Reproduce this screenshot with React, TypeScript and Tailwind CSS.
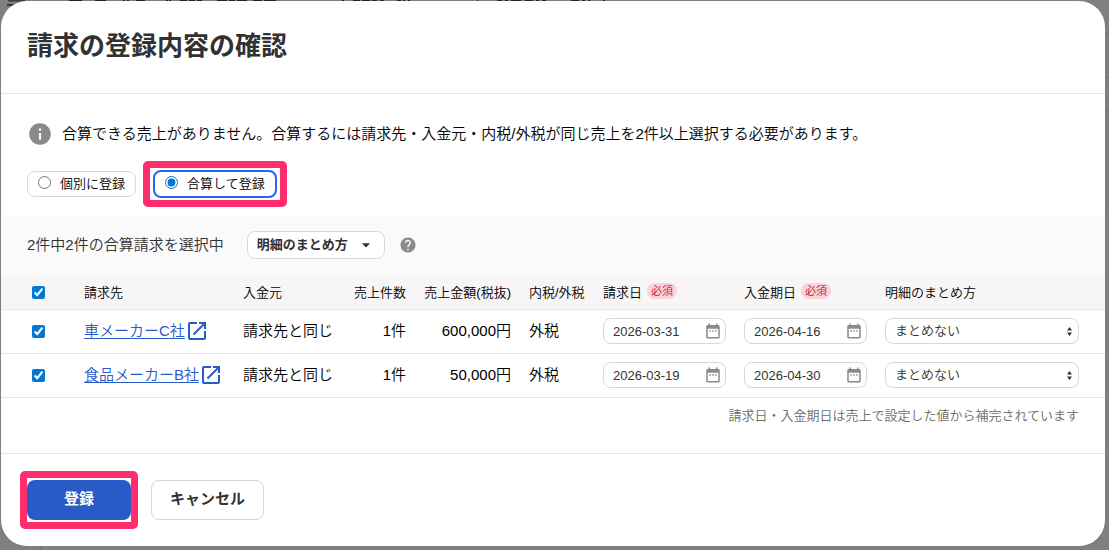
import { useState } from 'react'
import type { ReactNode } from 'react'
import { MdArrowDropDown, MdDateRange, MdHelp, MdInfo, MdOpenInNew } from 'react-icons/md'

type Invoice = {
  id: string
  name: string
  amount: string
  billingDate: string
  paymentDate: string
}

const invoices: Invoice[] = [
  { id: 'c', name: '車メーカーC社', amount: '600,000円', billingDate: '2026-03-31', paymentDate: '2026-04-16' },
  { id: 'b', name: '食品メーカーB社', amount: '50,000円', billingDate: '2026-03-19', paymentDate: '2026-04-30' },
]

const checkboxClass = 'block size-[13px] accent-[#0078d7]'

// Dimmed page edges that peek out around the dialog
const Backdrop = () => (
  <svg aria-hidden="true" className="pointer-events-none absolute inset-0 h-full w-full" fill="none">
    <path d="M40.5 0v550M155.5 0v1M325.5 0v1M448.5 0v1M1105 32.5h4M1105 77.5h4M1105 110.5h4" stroke="#737373" />
    <path d="M8 .5h17M7 5h8" stroke="#3c3c3c" strokeWidth="2" />
    <path
      d="M69 .5h13M95 .5h11M123 .5h2M127 .5h2M136 .5h9M166 .5h2M169 .5h2M180 .5h7M189 .5h6M197 .5h5M217 .5h10M229 .5h6M237 .5h10M253 .5h9M264 .5h12M342 .5h2M353 .5h7M362 .5h8M372 .5h5M380 .5h4M397 .5h4M403 .5h2M408 .5h2M477 .5h1M497 .5h5M505 .5h3M511 .5h10M525 .5h8M536 .5h3M542 .5h4M571 .5h8M582 .5h3M588 .5h2M603 .5h2"
      stroke="#26222a"
    />
  </svg>
)

const Highlight = ({ tight, children }: { tight?: boolean; children: ReactNode }) => (
  <div className="relative">
    {children}
    <span
      className={`pointer-events-none absolute -inset-y-[9px] rounded-[5px] border-[7px] border-[#ff2d6b] ${
        tight ? '-inset-x-[7px]' : '-inset-x-[10px]'
      }`}
    />
  </div>
)

const Required = () => (
  <span className="ml-[5px] inline-block rounded-full bg-[#fad2d7] px-1 align-[2px] text-[11px] leading-4 text-[#b4143c]">
    必須
  </span>
)

const DateField = ({ label, value }: { label: string; value: string }) => (
  <div className="relative">
    <input
      type="text"
      aria-label={label}
      defaultValue={value}
      className="block h-[26px] w-full rounded-lg border border-[#d7d7d7] bg-white pr-8 pl-[9px] text-[13px] text-[#323232]"
    />
    <MdDateRange className="pointer-events-none absolute top-1 right-1 size-[18px] text-[#8c8989]" />
  </div>
)

const GroupingSelect = ({ label }: { label: string }) => (
  <div className="relative">
    <select
      aria-label={label}
      className="block h-[26px] w-full appearance-none rounded-lg border border-[#d7d7d7] bg-white pr-6 pl-[9px] text-[13px] text-[#323232]"
    >
      <option>まとめない</option>
      <option>まとめる</option>
    </select>
    <svg viewBox="0 0 5 9" className="pointer-events-none absolute top-[9px] right-[7px] h-[9px] w-[5px] fill-[#323232]">
      <path d="M2.5 0 5 3.6H0zM0 5.4h5L2.5 9z" />
    </svg>
  </div>
)

export default function App() {
  const [mode, setMode] = useState('combined')

  return (
    <div className="relative min-h-screen bg-[#808080] pt-px pr-1 pb-1 pl-px font-['Liberation_Sans','Noto_Sans_CJK_JP',sans-serif] text-[15px] font-[350] text-black">
      <Backdrop />
      <div role="dialog" aria-labelledby="dialog-title" className="relative overflow-hidden rounded-[26px] bg-white">
        <header className="border-b border-[#e6e6e6] px-[26px] pt-[25px] pb-[27px]">
          <h1 id="dialog-title" className="text-[26px] leading-10 font-bold text-[#323232]">
            請求の登録内容の確認
          </h1>
        </header>

        <div className="px-[26px] pt-[29px] pb-[17px]">
          <p className="flex items-center gap-[9px] leading-[22px]">
            <MdInfo className="-my-1 size-[26px] shrink-0 text-[#8c8989]" />
            合算できる売上がありません。合算するには請求先・入金元・内税/外税が同じ売上を2件以上選択する必要があります。
          </p>

          <div className="mt-[25px] flex items-center gap-[17px] text-[13px]">
            <label className="flex h-[26px] items-center gap-[9px] rounded-lg border border-[#d7d7d7] px-[10px]">
              <input
                type="radio"
                name="mode"
                checked={mode === 'single'}
                onChange={() => setMode('single')}
                className="mb-1 size-[13px] accent-[#0078d7]"
              />
              個別に登録
            </label>
            <Highlight>
              <label className="flex h-7 items-center gap-[9px] rounded-lg border-2 border-[#2864f0] px-[10px]">
                <input
                  type="radio"
                  name="mode"
                  checked={mode === 'combined'}
                  onChange={() => setMode('combined')}
                  className="mb-1 size-[13px] accent-[#0078d7]"
                />
                合算して登録
              </label>
            </Highlight>
          </div>
        </div>

        <div className="flex items-center bg-[#fafafa] px-[26px] pt-4 pb-[17px] text-[#323232]">
          <span>2件中2件の合算請求を選択中</span>
          <button
            type="button"
            className="ml-[23px] flex h-7 items-center gap-2 rounded-lg border border-[#d7d7d7] bg-white pr-2 pl-[9px] text-[13px] font-bold"
          >
            明細のまとめ方
            <MdArrowDropDown className="size-5" />
          </button>
          <button type="button" aria-label="ヘルプ" className="ml-[14px]">
            <MdHelp className="size-[18px] text-[#8c8989]" />
          </button>
        </div>

        <table className="w-full table-fixed text-left">
          <colgroup>
            <col className="w-[74px]" />
            <col className="w-[159px]" />
            <col className="w-[90px]" />
            <col className="w-[91px]" />
            <col className="w-[105px]" />
            <col className="w-[74px]" />
            <col className="w-[141px]" />
            <col className="w-[141px]" />
            <col />
          </colgroup>
          <thead className="bg-[#f7f5f6] text-[13px]">
            <tr className="h-[33px] border-b border-[#e6e6e6] *:px-[9px] *:font-[350] *:whitespace-nowrap">
              <td>
                <input type="checkbox" aria-label="すべて選択" defaultChecked className={`${checkboxClass} ml-[22px]`} />
              </td>
              <th>請求先</th>
              <th>入金元</th>
              <th className="text-right">売上件数</th>
              <th className="text-right">売上金額(税抜)</th>
              <th>内税/外税</th>
              <th>請求日<Required /></th>
              <th>入金期日<Required /></th>
              <th>明細のまとめ方</th>
            </tr>
          </thead>
          <tbody>
            {invoices.map((invoice) => (
              <tr key={invoice.id} className="h-11 border-b border-[#e6e6e6] *:px-[9px] *:whitespace-nowrap">
                <td>
                  <input type="checkbox" aria-label={invoice.name} defaultChecked className={`${checkboxClass} ml-[22px]`} />
                </td>
                <td>
                  <a href="#" className="flex items-center text-[#285ac8]">
                    <span className="underline underline-offset-2">{invoice.name}</span>
                    <MdOpenInNew className="size-6 shrink-0" />
                  </a>
                </td>
                <td>請求先と同じ</td>
                <td className="text-right">1件</td>
                <td className="text-right">{invoice.amount}</td>
                <td>外税</td>
                <td>
                  <DateField label={`${invoice.name} 請求日`} value={invoice.billingDate} />
                </td>
                <td>
                  <DateField label={`${invoice.name} 入金期日`} value={invoice.paymentDate} />
                </td>
                <td className="pr-[26px]!">
                  <GroupingSelect label={`${invoice.name} 明細のまとめ方`} />
                </td>
              </tr>
            ))}
          </tbody>
        </table>

        <p className="px-[26px] pt-2 pb-[27px] text-right text-[13px] leading-5 text-[#6e6b6b]">
          請求日・入金期日は売上で設定した値から補完されています
        </p>

        <footer className="flex gap-5 border-t border-[#e6e6e6] p-[26px] font-bold">
          <Highlight tight>
            <button type="button" className="h-10 w-[104px] rounded-lg bg-[#285ac8] text-white">
              登録
            </button>
          </Highlight>
          <button type="button" className="h-10 rounded-lg border border-[#d7d7d7] px-[18px] text-[#323232]">
            キャンセル
          </button>
        </footer>
      </div>
    </div>
  )
}
